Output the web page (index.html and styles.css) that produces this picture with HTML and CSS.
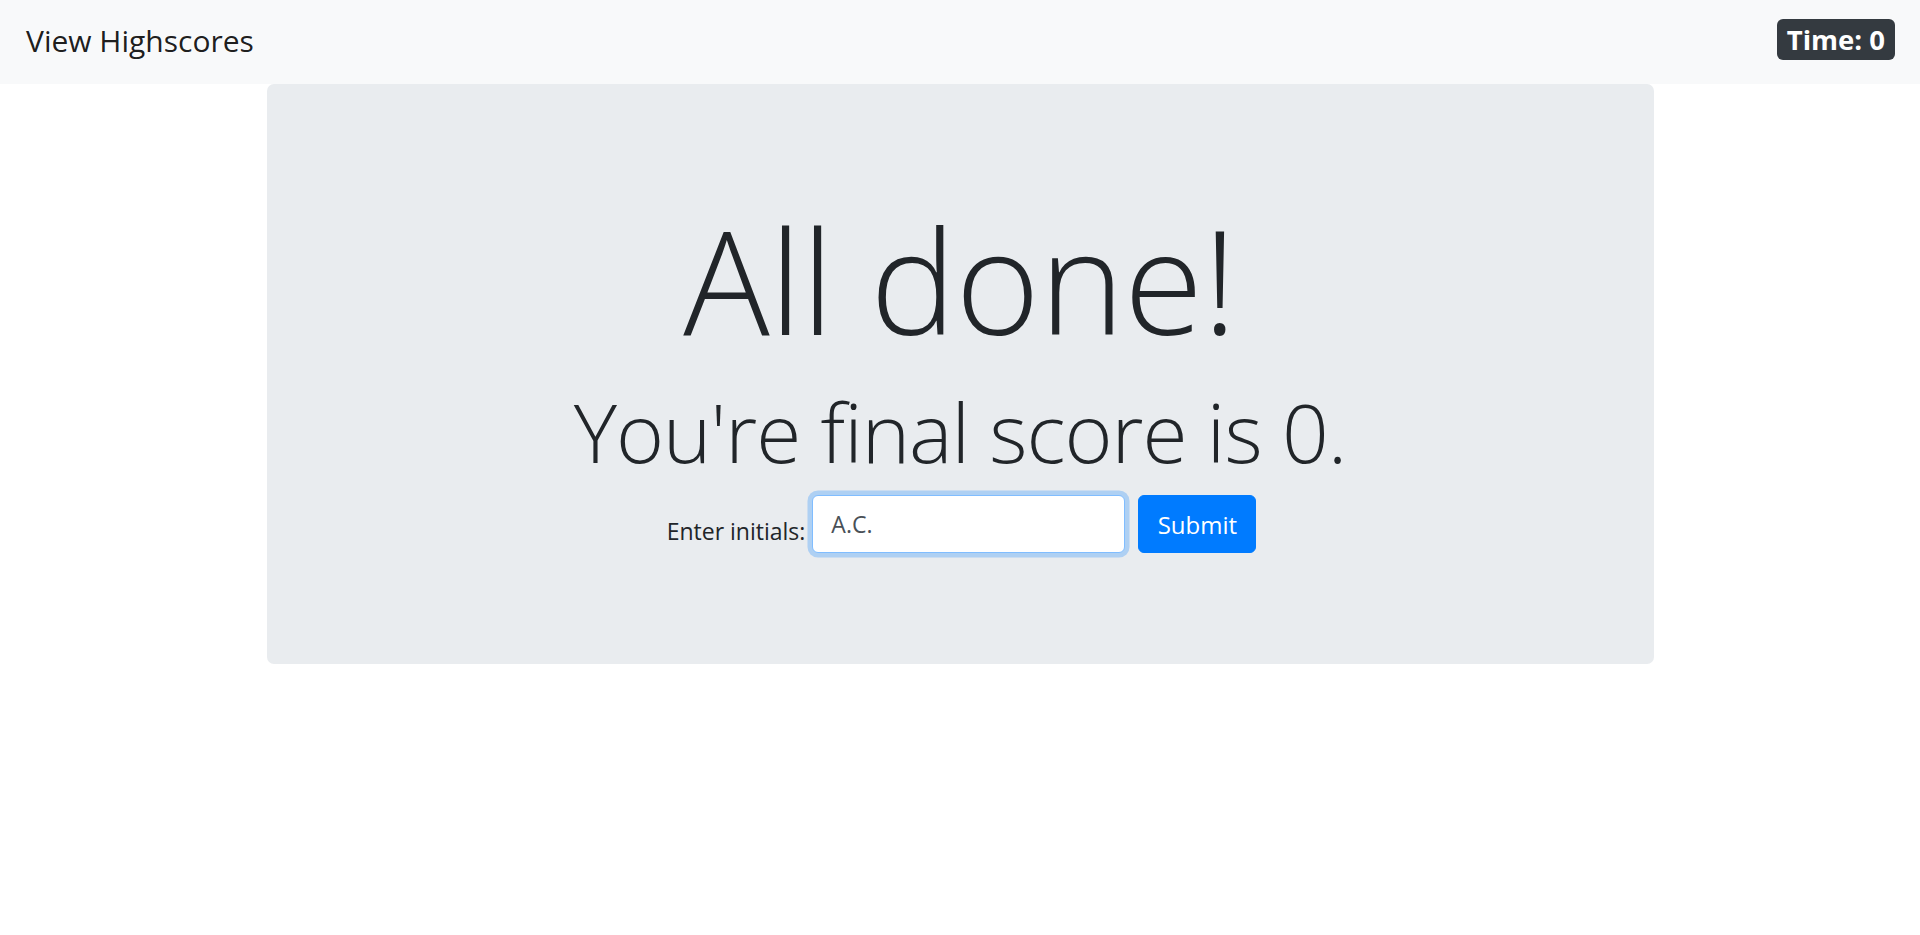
FILE: index.html
```html
<!DOCTYPE html>
<html lang="en">
<head>
<meta charset="utf-8">
<title>Quiz</title>
<link rel="stylesheet" href="styles.css">
</head>
<body>
<nav class="navbar">
  <a class="brand" href="#">View Highscores</a>
  <span class="badge">Time: 0</span>
</nav>
<main class="jumbotron">
  <h1 class="display-1">All done!</h1>
  <h2 class="display-4">You're final score is 0.</h2>
  <form class="score-form">
    <label class="label" for="initials">Enter initials:</label>
    <input class="input" id="initials" type="text" value="A.C.">
    <button class="btn" type="button">Submit</button>
  </form>
</main>
</body>
</html>
```
FILE: styles.css
```css
html, body {
  margin: 0;
  padding: 0;
  background: #fff;
}
body {
  font-family: "Open Sans", "Noto Sans", "Liberation Sans", sans-serif;
  color: #212529;
  font-size: 24px;
  line-height: 1.5;
}
.navbar {
  height: 84px;
  box-sizing: border-box;
  background: #f8f9fa;
  display: flex;
  align-items: center;
  justify-content: space-between;
  padding: 0 25px 0 26px;
}
.brand {
  font-size: 30px;
  line-height: 1.5;
  color: rgba(0, 0, 0, 0.9);
  text-decoration: none;
  font-weight: 400;
  margin-top: -4px;
}
.badge {
  background: #343a40;
  color: #fff;
  font-weight: 700;
  font-size: 27.5px;
  line-height: 41px;
  height: 41px;
  padding: 0 10px;
  border-radius: 6px;
  margin-top: -6px;
}
.jumbotron {
  width: 1387px;
  height: 580px;
  box-sizing: border-box;
  margin: 0 auto;
  background: #e9ecef;
  border-radius: 7px;
  padding-top: 109px;
  text-align: center;
}
.display-1 {
  margin: 0;
  font-size: 144px;
  font-weight: 300;
  line-height: 1.2;
  letter-spacing: -0.5px;
}
.display-4 {
  margin: 16px 0 0;
  font-size: 82px;
  font-weight: 300;
  line-height: 1.2;
  letter-spacing: -1px;
}
.score-form {
  display: flex;
  justify-content: center;
  align-items: center;
  margin-top: 15px;
  padding-left: 3px;
}
.label {
  font-size: 23px;
  line-height: 1.5;
  align-self: flex-end;
  margin-bottom: 5px;
  margin-right: 7px;
}
.input {
  width: 313px;
  height: 58px;
  box-sizing: border-box;
  border: 1.5px solid #80bdff;
  border-radius: 6px;
  box-shadow: 0 0 0 4.5px rgba(0, 123, 255, 0.25);
  padding: 0 18px;
  font-family: inherit;
  font-size: 23px;
  color: #495057;
  background: #fff;
  outline: none;
}
.btn {
  margin-left: 13px;
  height: 58px;
  width: 118px;
  box-sizing: border-box;
  border: 1.5px solid #007bff;
  background: #007bff;
  color: #fff;
  font-family: inherit;
  font-size: 24px;
  border-radius: 6px;
  padding: 0;
}
```
